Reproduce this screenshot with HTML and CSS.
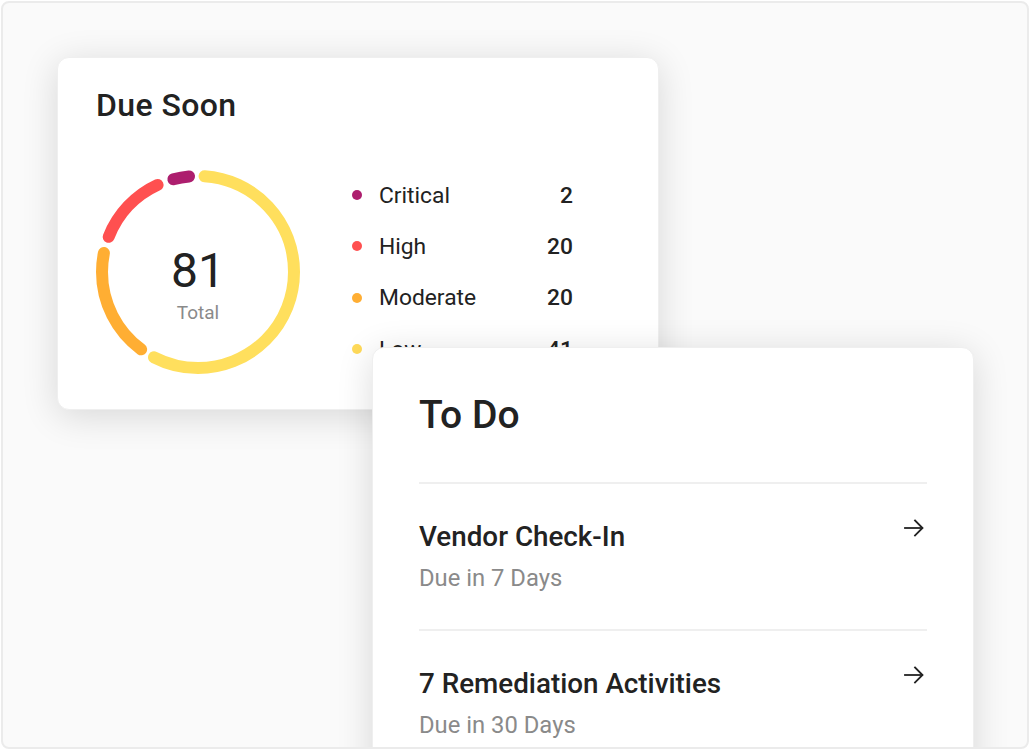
FILE: index.html
```html
<!DOCTYPE html>
<html lang="en">
<head>
<meta charset="utf-8">
<title>Due Soon / To Do</title>
<link rel="stylesheet" href="styles.css">
</head>
<body>
<div class="frame">
  <section class="card due">
    <h2 class="due-title">Due Soon</h2>
    <div class="due-body">
      <div class="donut">
        <svg class="donut-svg" width="210" height="210" viewBox="0 0 210 210">
          <g transform="rotate(-90 105 105)" fill="none" stroke-width="12" stroke-linecap="round">
            <circle cx="105" cy="105" r="96" stroke="#FFDF5D" stroke-dasharray="340.1 603.19" stroke-dashoffset="-6.7"/>
            <circle cx="105" cy="105" r="96" stroke="#FFAE33" stroke-dasharray="108.9 603.19" stroke-dashoffset="-361.9"/>
            <circle cx="105" cy="105" r="96" stroke="#FF5050" stroke-dasharray="72.9 603.19" stroke-dashoffset="-487.6"/>
            <circle cx="105" cy="105" r="96" stroke="#AD1E6E" stroke-dasharray="15.9 603.19" stroke-dashoffset="-577.2"/>
          </g>
        </svg>
        <div class="donut-label">
          <span class="donut-num">81</span>
          <span class="donut-cap">Total</span>
        </div>
      </div>
      <ul class="legend">
        <li class="legend-row"><span class="dot dot-critical"></span><span class="legend-name">Critical</span><span class="legend-val">2</span></li>
        <li class="legend-row"><span class="dot dot-high"></span><span class="legend-name">High</span><span class="legend-val">20</span></li>
        <li class="legend-row"><span class="dot dot-moderate"></span><span class="legend-name">Moderate</span><span class="legend-val">20</span></li>
        <li class="legend-row"><span class="dot dot-low"></span><span class="legend-name">Low</span><span class="legend-val">41</span></li>
      </ul>
    </div>
  </section>

  <section class="card todo">
    <h2 class="todo-title">To Do</h2>
    <ul class="todo-list">
      <li class="todo-item">
        <div class="todo-text">
          <div class="todo-name">Vendor Check-In</div>
          <div class="todo-due">Due in 7 Days</div>
        </div>
        <svg class="arrow" width="22" height="22" viewBox="0 0 22 22" fill="none" stroke="#222" stroke-width="1.8" stroke-linecap="square">
          <path d="M2 11h17"/>
          <path d="M12 3.5l7.5 7.5-7.5 7.5"/>
        </svg>
      </li>
      <li class="todo-item">
        <div class="todo-text">
          <div class="todo-name">7 Remediation Activities</div>
          <div class="todo-due">Due in 30 Days</div>
        </div>
        <svg class="arrow" width="22" height="22" viewBox="0 0 22 22" fill="none" stroke="#222" stroke-width="1.8" stroke-linecap="square">
          <path d="M2 11h17"/>
          <path d="M12 3.5l7.5 7.5-7.5 7.5"/>
        </svg>
      </li>
    </ul>
  </section>
</div>
</body>
</html>
```

FILE: styles.css
```css
* { box-sizing: border-box; }

html, body {
  margin: 0;
  padding: 0;
  background: #ffffff;
  font-family: Roboto, "Liberation Sans", Arial, sans-serif;
  color: #222222;
}

.frame {
  position: relative;
  margin: 1px;
  width: 1028px;
  height: 748px;
  border: 2px solid #ebebeb;
  border-radius: 8px;
  background: #fafafa;
  overflow: hidden;
}

.card {
  background: #ffffff;
  border: 1px solid #efefef;
  border-radius: 12px;
  box-shadow: 0 6px 36px rgba(0, 0, 0, 0.14);
}

/* Due Soon card */
.due {
  margin: 54px 0 0 54px;
  width: 602px;
  height: 353px;
  padding: 29px 0 0 35px;
}

.due-title {
  margin: 0 0 0 3px;
  font-size: 32px;
  line-height: 36px;
  font-weight: 500;
  letter-spacing: 0.4px;
  color: #222;
}

.due-body {
  display: flex;
  align-items: flex-start;
  margin-top: 44px;
}

.donut {
  display: grid;
  width: 210px;
  height: 210px;
  flex: none;
}

.donut-svg,
.donut-label {
  grid-area: 1 / 1;
}

.donut-label {
  display: flex;
  flex-direction: column;
  align-items: center;
  padding-top: 80px;
}

.donut-num {
  font-size: 48px;
  line-height: 48px;
  font-weight: 400;
  color: #222;
}

.donut-cap {
  margin-top: 7px;
  font-size: 19px;
  line-height: 22px;
  color: #8a8a8a;
}

.legend {
  list-style: none;
  margin: 2.5px 0 0 49px;
  padding: 0;
  width: 221px;
}

.legend-row {
  display: flex;
  align-items: center;
  height: 51.3px;
  font-size: 22.8px;
}

.dot {
  width: 10px;
  height: 10px;
  border-radius: 50%;
  flex: none;
  margin-right: 17px;
}

.dot-critical { background: #AD1E6E; }
.dot-high { background: #FF5050; }
.dot-moderate { background: #FFAE33; }
.dot-low { background: #FFDA5A; }

.legend-name {
  flex: 1;
}

.legend-val {
  font-weight: 500;
}

/* To Do card */
.todo {
  position: absolute;
  left: 369px;
  top: 344px;
  width: 602px;
  height: 440px;
  padding: 43px 46px 0 46px;
}

.todo-title {
  margin: 0;
  font-size: 39px;
  line-height: 48px;
  font-weight: 500;
  color: #222;
}

.todo-list {
  list-style: none;
  margin: 43px 0 0 0;
  padding: 0;
}

.todo-item {
  display: flex;
  align-items: flex-start;
  justify-content: space-between;
  border-top: 2px solid #efefef;
  padding: 35px 2px 36px 0;
}

.todo-name {
  font-size: 27.8px;
  line-height: 36px;
  font-weight: 500;
  color: #222;
}

.todo-due {
  margin-top: 8px;
  font-size: 23.8px;
  line-height: 30px;
  color: #8a8a8a;
}

.arrow {
  flex: none;
  margin-top: -2px;
}
```
